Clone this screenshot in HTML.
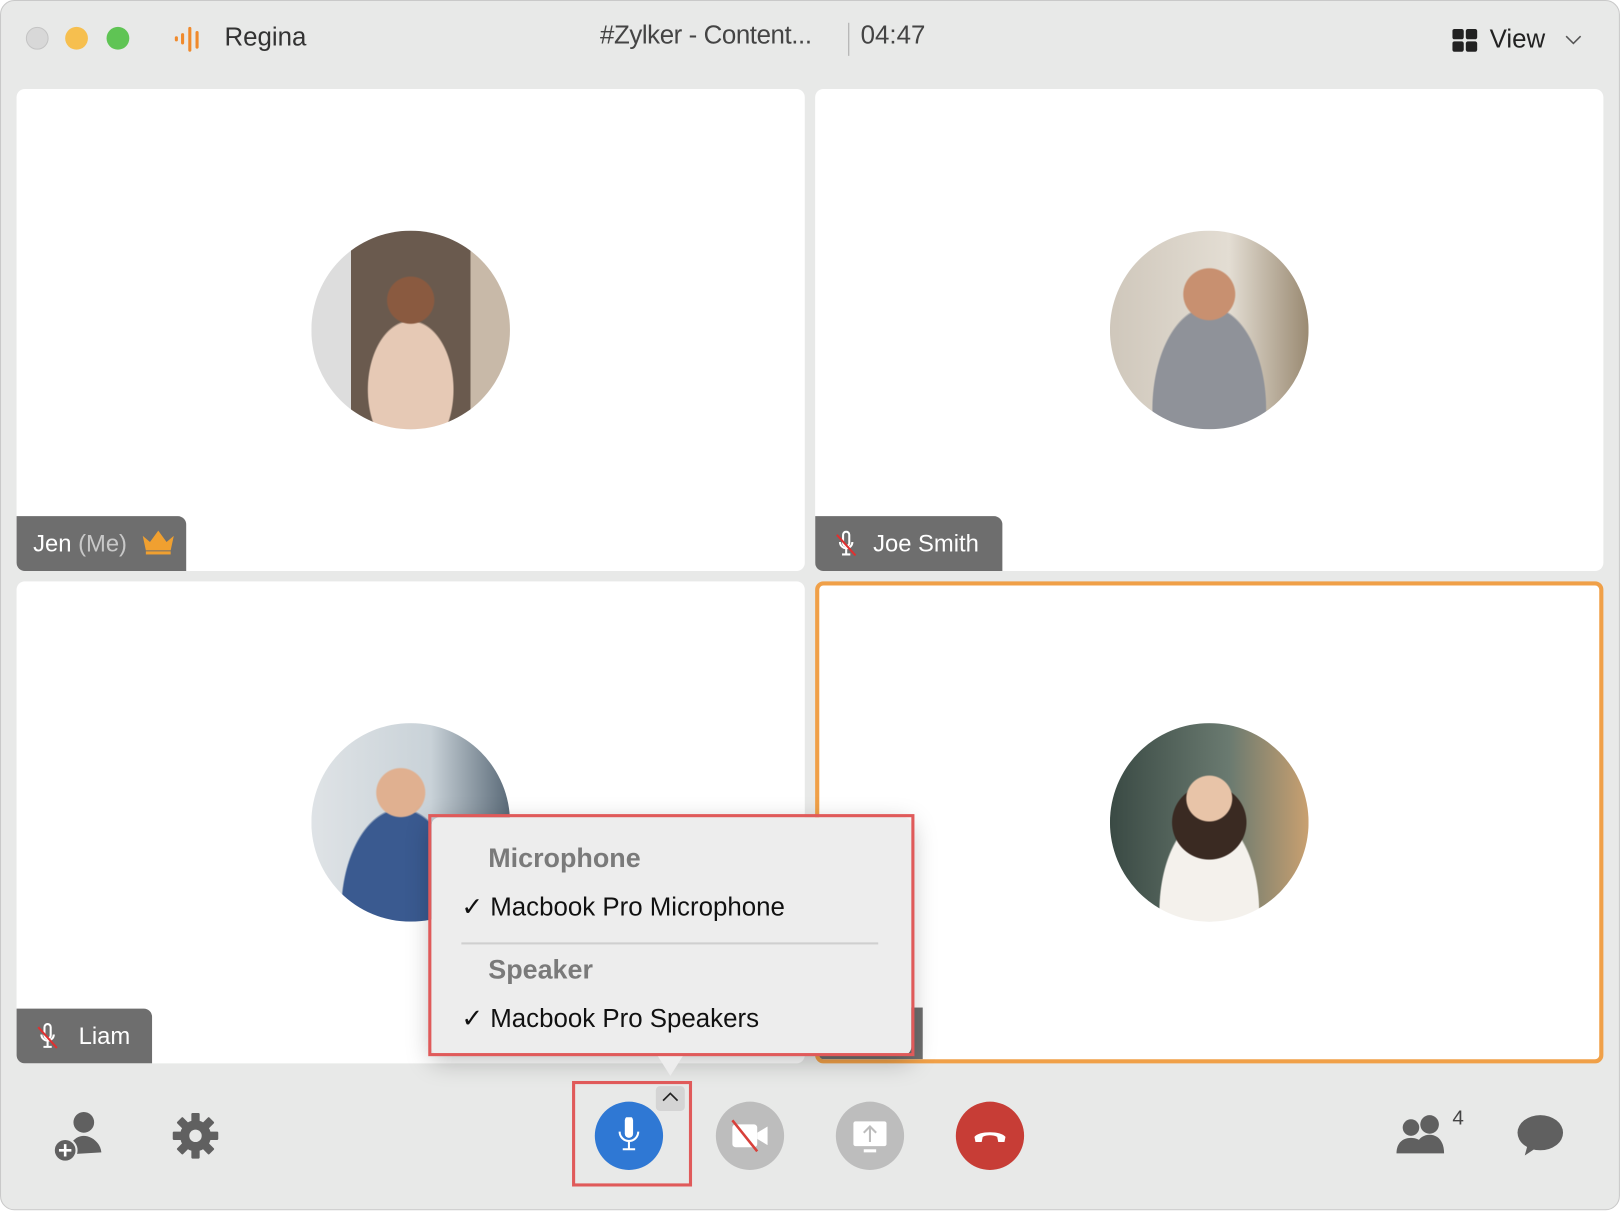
<!DOCTYPE html>
<html><head><meta charset="utf-8"><style>
html,body{margin:0;padding:0;background:#fff;width:1622px;height:1213px;overflow:hidden}
#s{position:absolute;left:0;top:0;width:1568px;height:1173px;transform:scale(1.03444);transform-origin:0 0;font-family:"Liberation Sans",sans-serif}
.win{position:absolute;left:0;top:0;width:1566px;height:1170px;background:#e8e9e8;border-radius:14px;border:1px solid #c9c9c9;box-sizing:border-box}
.dot{position:absolute;top:26px;width:22px;height:22px;border-radius:50%}
.tile{position:absolute;background:#fff;border-radius:8px;overflow:hidden;width:762px;height:466px}
.av{position:absolute;width:192px;height:192px;border-radius:50%;left:285px;top:137px;overflow:hidden}
.lab{position:absolute;left:0;bottom:0;height:53px;background:#6e6e6e;color:#fff;font-size:23px;line-height:53px;border-radius:0 8px 0 0;padding:0 14px 0 16px;box-sizing:border-box}
.btn{position:absolute;top:1065px;width:66px;height:66px;border-radius:50%}
</style></head><body><div id="s">
<div class="win"></div>
<div class="dot" style="left:25px;background:#d8d8d8;border:1px solid #c4c4c4;box-sizing:border-box"></div>
<div class="dot" style="left:63px;background:#f6bf4f"></div>
<div class="dot" style="left:103px;background:#5fc454"></div>
<svg style="position:absolute;left:168px;top:24px" width="32" height="28"><g fill="#f08a2c"><rect x="1" y="11" width="3" height="5" rx="1.5"/><rect x="7" y="8" width="3" height="11" rx="1.5"/><rect x="14" y="2" width="3" height="24" rx="1.5"/><rect x="21" y="6" width="3" height="17" rx="1.5"/></g></svg>
<div style="position:absolute;left:217px;top:22px;font-size:25px;color:#333">Regina</div>
<div style="position:absolute;left:580px;top:20px;font-size:25px;color:#444;letter-spacing:-0.4px">#Zylker - Content...</div>
<div style="position:absolute;left:820px;top:22px;width:1px;height:32px;background:#aaa"></div>
<div style="position:absolute;left:832px;top:20px;font-size:25px;color:#444">04:47</div>
<svg style="position:absolute;left:1404px;top:28px" width="26" height="24"><g fill="#222"><rect x="0" y="0" width="11" height="10" rx="2"/><rect x="13" y="0" width="11" height="10" rx="2"/><rect x="0" y="12" width="11" height="10" rx="2"/><rect x="13" y="12" width="11" height="10" rx="2"/></g></svg>
<div style="position:absolute;left:1440px;top:24px;font-size:25px;color:#222">View</div>
<svg style="position:absolute;left:1513px;top:34px" width="16" height="10"><path d="M1 1l7 7 7-7" stroke="#555" stroke-width="1.5" fill="none"/></svg>

<div class="tile" style="left:16px;top:86px">
 <div class="av" style="background:radial-gradient(circle at 50% 35%,#8a5a40 0 14%,transparent 15%),radial-gradient(ellipse at 50% 80%,#e6c9b5 0 30%,transparent 31%),linear-gradient(90deg,#ddd 0 20%,#6a5a4e 20% 80%,#c8b9a8 80%)"></div>
 <div class="lab" style="width:164px">Jen <span style="color:#c8c8c8">(Me)</span></div>
 <svg style="position:absolute;left:120px;top:424px" width="34" height="28"><path d="M2 8l7 6 8-11 8 11 7-6-3 14H5z" fill="#f0a030"/><rect x="5" y="23" width="24" height="3" fill="#f0a030"/></svg>
</div>
<div class="tile" style="left:788px;top:86px">
 <div class="av" style="background:radial-gradient(circle at 50% 32%,#c89070 0 15%,transparent 16%),radial-gradient(ellipse at 50% 90%,#8f9299 0 40%,transparent 41%),linear-gradient(90deg,#cfc7bb,#e3ddd3 60%,#9a8a72)"></div>
 <div class="lab" style="width:181px;padding-left:56px">Joe Smith</div>
 <svg style="position:absolute;left:16px;top:427px" width="28" height="28"><path d="M11 4a3 3 0 016 0v8a3 3 0 01-6 0z M8 11a6 6 0 0012 0 M14 18v5 M10 23h8" stroke="#fff" stroke-width="2" fill="none"/><path d="M5 4l18 20" stroke="#e03030" stroke-width="2"/></svg>
</div>
<div class="tile" style="left:16px;top:562px">
 <div class="av" style="background:radial-gradient(circle at 45% 35%,#e0b090 0 14%,transparent 15%),radial-gradient(ellipse at 45% 95%,#3a5a90 0 38%,transparent 39%),linear-gradient(90deg,#dfe3e6,#c9d2d8 60%,#5a6a78)"></div>
 <div class="lab" style="width:131px;padding-left:60px">Liam</div>
 <svg style="position:absolute;left:16px;top:427px" width="28" height="28"><path d="M11 4a3 3 0 016 0v8a3 3 0 01-6 0z M8 11a6 6 0 0012 0 M14 18v5 M10 23h8" stroke="#fff" stroke-width="2" fill="none"/><path d="M5 4l18 20" stroke="#e03030" stroke-width="2"/></svg>
</div>
<div class="tile" style="left:788px;top:562px;border:4px solid #f0a048;box-sizing:border-box">
 <div class="av" style="left:281px;top:133px;background:radial-gradient(circle at 50% 38%,#e8c4a8 0 14%,transparent 15%),radial-gradient(ellipse at 50% 50%,#3a2a22 0 26%,transparent 27%),radial-gradient(ellipse at 50% 95%,#f4f1ec 0 35%,transparent 36%),linear-gradient(90deg,#3a4a44,#6a7a70 60%,#c9a070)"></div>
 <div style="position:absolute;left:0;bottom:0;width:100px;height:50px;background:#6e6e6e"></div>
</div>

<div style="position:absolute;left:417px;top:790px;width:464px;height:230px;background:#ededed;border-radius:8px;box-shadow:0 6px 24px rgba(0,0,0,.25)"></div>
<div style="position:absolute;left:634px;top:1018px;width:0;height:0;border-left:14px solid transparent;border-right:14px solid transparent;border-top:22px solid #ededed"></div>
<div style="position:absolute;left:414px;top:787px;width:470px;height:234px;border:3px solid #e05a5a;box-sizing:border-box"></div>
<div style="position:absolute;left:472px;top:814px;font-size:26px;color:#7a7a7a;font-weight:bold">Microphone</div>
<div style="position:absolute;left:446px;top:862px;font-size:25px;color:#111">✓ Macbook Pro Microphone</div>
<div style="position:absolute;left:446px;top:911px;width:403px;height:2px;background:#cfcfcf"></div>
<div style="position:absolute;left:472px;top:922px;font-size:26px;color:#7a7a7a;font-weight:bold">Speaker</div>
<div style="position:absolute;left:446px;top:970px;font-size:25px;color:#111">✓ Macbook Pro Speakers</div>

<div style="position:absolute;left:553px;top:1045px;width:116px;height:102px;border:3px solid #e05a5a;box-sizing:border-box"></div>
<div style="position:absolute;left:634px;top:1050px;width:28px;height:24px;background:#d4d4d4;border-radius:4px"></div>
<svg style="position:absolute;left:640px;top:1054px" width="16" height="12"><path d="M1 10l7-7 7 7" stroke="#222" stroke-width="1.6" fill="none"/></svg>
<div class="btn" style="left:575px;background:#2f78d4"></div>
<svg style="position:absolute;left:592px;top:1080px" width="32" height="36"><path d="M12 3a4 4 0 018 0v13a4 4 0 01-8 0z" fill="#fff"/><path d="M7 14a9 9 0 0018 0 M16 24v6 M10 31h12" stroke="#fff" stroke-width="2" fill="none"/></svg>
<div class="btn" style="left:692px;background:#bdbdbd"></div>
<svg style="position:absolute;left:705px;top:1080px" width="42" height="36"><rect x="3" y="7" width="24" height="22" rx="3" fill="#fff"/><path d="M27 15l10-6v18l-10-6z" fill="#fff"/><path d="M3 3l24 30" stroke="#d8403a" stroke-width="2.5"/></svg>
<div class="btn" style="left:808px;background:#bdbdbd"></div>
<svg style="position:absolute;left:822px;top:1080px" width="38" height="38"><rect x="3" y="4" width="32" height="24" rx="2" fill="#fff"/><path d="M19 24V9 M13 15l6-6 6 6" stroke="#bdbdbd" stroke-width="2" fill="none"/><rect x="13" y="31" width="12" height="3" fill="#fff"/></svg>
<div class="btn" style="left:924px;background:#c73d36"></div>
<svg style="position:absolute;left:939px;top:1085px" width="36" height="26"><path d="M3 14c4-6 26-6 30 0l-1 5h-6l-1-5c-4-2-10-2-14 0l-1 5H4z" fill="#fff"/></svg>
<svg style="position:absolute;left:48px;top:1072px" width="56" height="56"><circle cx="33" cy="13" r="10" fill="#606060"/><path d="M18 44c0-12 8-18 15-18s16 6 17 16z" fill="#606060"/><circle cx="15" cy="40" r="11" fill="#606060" stroke="#e8e9e8" stroke-width="2"/><path d="M15 34v12 M9 40h12" stroke="#fff" stroke-width="2.5"/></svg>
<svg style="position:absolute;left:165px;top:1074px" width="48" height="48" viewBox="0 0 48 48"><g fill="#606060"><circle cx="24" cy="24" r="15"/><g id="t"><rect x="20" y="2" width="8" height="10" rx="1"/><rect x="20" y="36" width="8" height="10" rx="1"/></g><use href="#t" transform="rotate(45 24 24)"/><use href="#t" transform="rotate(90 24 24)"/><use href="#t" transform="rotate(135 24 24)"/></g><circle cx="24" cy="24" r="6" fill="#e8e9e8"/></svg>
<svg style="position:absolute;left:1348px;top:1075px" width="60" height="44"><circle cx="16" cy="15" r="8" fill="#606060"/><circle cx="34" cy="12" r="9" fill="#606060"/><path d="M2 40c0-10 6-15 14-15s14 5 14 15z M20 40c0-13 7-18 14-18s14 5 14 18z" fill="#606060"/></svg>
<div style="position:absolute;left:1404px;top:1070px;font-size:20px;color:#444">4</div>
<svg style="position:absolute;left:1465px;top:1076px" width="48" height="44"><ellipse cx="24" cy="19" rx="22" ry="17" fill="#606060"/><path d="M12 30l-3 11 12-8z" fill="#606060"/></svg>
</div></body></html>
